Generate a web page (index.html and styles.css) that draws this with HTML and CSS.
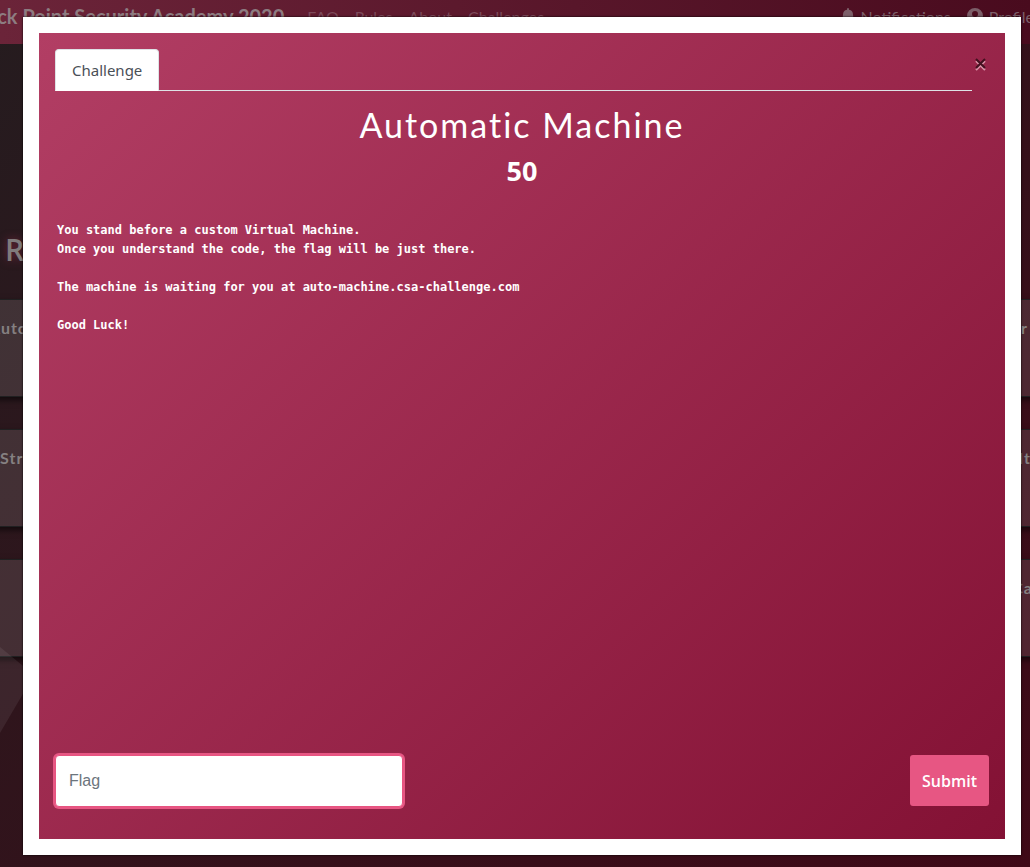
FILE: index.html
```
<!DOCTYPE html>
<html lang="en">
<head>
<meta charset="utf-8">
<meta name="viewport" content="width=device-width, initial-scale=1">
<title>Check Point Security Academy 2020</title>
<link rel="stylesheet" href="styles.css">
</head>
<body>
<div class="page">
  <svg class="facet" viewBox="0 0 60 90" aria-hidden="true"><path d="M0 2L34 30L0 88Z" fill="#ffffff" fill-opacity=".07"/></svg>
  <nav class="nav">
    <a class="brand" href="#">Check Point Security Academy 2020</a>
    <a class="nav-link" href="#">FAQ</a>
    <a class="nav-link" href="#">Rules</a>
    <a class="nav-link" href="#">About</a>
    <a class="nav-link" href="#">Challenges</a>
    <span class="spacer"></span>
    <a class="nav-link account" href="#"><svg class="icon" viewBox="0 0 14 16"><path fill="currentColor" d="M7 16a2 2 0 0 0 2-2H5a2 2 0 0 0 2 2zM13.700 11.300C13.100 10.700 12 9.700 12 6.500A5 5 0 0 0 8 1.700V1a1 1 0 0 0-2 0v.7A5 5 0 0 0 2 6.500C2 9.700.9 10.700.3 11.300A1 1 0 0 0 1 13h12a1 1 0 0 0 .7-1.700z"/></svg>Notifications</a>
    <a class="nav-link account" href="#"><svg class="icon" viewBox="0 0 16 16"><path fill="currentColor" fill-rule="evenodd" d="M8 0a8 8 0 1 0 0 16A8 8 0 0 0 8 0zm0 3a3 3 0 1 1 0 6 3 3 0 0 1 0-6zm0 11a6 6 0 0 1-4.600-2.200C4 10.700 5.100 10 6.400 10c.5.200 1 .3 1.600.3s1.100-.1 1.600-.3c1.300 0 2.400.7 3 1.800A6 6 0 0 1 8 14z"/></svg>Profile</a>
  </nav>
  <h3 class="category">R</h3>
  <div class="cards">
    <div class="card">Auto</div>
    <div class="card card-end">r</div>
    <div class="card inset">Str</div>
    <div class="card card-end near">It</div>
    <div class="card"></div>
    <div class="card card-end wide">Ca</div>
  </div>
</div>
<div class="overlay">
  <main class="modal" role="dialog" aria-labelledby="title">
    <div class="body">
      <header class="head">
        <div class="tabs"><button class="tab" type="button">Challenge</button></div>
        <button class="close" type="button" aria-label="Close"><svg class="cross" viewBox="0 0 13 13"><path d="M2 3L11 12M11 3L2 12" stroke="#d993a8" stroke-width="2"/><path d="M2 1L11 10M11 1L2 10" stroke="#42101f" stroke-width="2"/></svg></button>
      </header>
      <h1 class="title" id="title">Automatic Machine</h1>
      <h2 class="points">50</h2>
      <pre class="desc">You stand before a custom Virtual Machine.
Once you understand the code, the flag will be just there.

The machine is waiting for you at auto-machine.csa-challenge.com

Good Luck!</pre>
      <form class="answer">
        <input class="flag" type="text" placeholder="Flag" aria-label="Flag">
        <button class="submit" type="button">Submit</button>
      </form>
    </div>
  </main>
</div>
</body>
</html>
```
FILE: styles.css
```
* { box-sizing: border-box; }
body {
  margin: 0;
  font-family: Lato, sans-serif;
}
.page {
  position: relative;
  min-height: 100vh;
  overflow: hidden;
  background: linear-gradient(135deg, #251c1f, #3f0917);
}
.nav {
  display: flex;
  align-items: center;
  gap: 16px;
  height: 44px;
  padding-bottom: 12px;
  background: linear-gradient(90deg, #6b2439, #490b1e);
  white-space: nowrap;
  overflow: hidden;
}
.brand {
  margin: 0 7px 0 -38px;
  color: #8d7c81;
  font-size: 20px;
  font-weight: 700;
  text-decoration: none;
}
.nav-link {
  color: #7c4a5a;
  font-size: 16px;
  text-decoration: none;
}
.spacer { flex: 1; }
.account {
  display: flex;
  gap: 6px;
  align-items: center;
  color: #7c5f69;
}
.account:last-child { margin-right: -4px; }
.icon { height: 16px; }
.category {
  margin: 188px 0 0 5px;
  color: #807b7c;
  font: 600 30px/36px "Open Sans", sans-serif;
  text-shadow: 0 0 8px #6b2439;
}
.cards {
  display: grid;
  grid-template-columns: 1fr 1fr;
  gap: 32px;
  margin: 31px -12px 0;
}
.card {
  height: 98px;
  padding-top: 18px;
  border: 1px solid #202021;
  background: rgb(255 255 255 / 11%);
  box-shadow: 0 3px 6px rgb(0 0 0 / 60%);
  color: #858081;
  font-size: 16px;
  font-weight: 700;
  letter-spacing: 1px;
}
.inset { padding-left: 11px; }
.card-end {
  padding-right: 13px;
  text-align: right;
}
.near { padding-right: 10px; }
.wide { padding-right: 8px; }
.facet {
  position: absolute;
  top: 645px;
  left: 0;
  width: 60px;
}
.overlay {
  position: fixed;
  inset: 0;
  display: flex;
  padding: 17px 9px 12px 23px;
}
.modal {
  display: flex;
  flex: 1;
  padding: 16px;
  background: #fff;
  box-shadow: 0 0 2px #000;
}
.body {
  display: flex;
  flex: 1;
  flex-direction: column;
  padding: 16px 16px 32px;
  background: linear-gradient(135deg, #b23e64, #831134);
  color: #fff;
}
.head {
  display: flex;
  align-items: flex-start;
}
.tabs {
  display: flex;
  flex: 1;
  border-bottom: 1px solid #dee2e6;
}
.tab {
  height: 42px;
  margin-bottom: -1px;
  padding: 0 16px;
  border: 1px solid #dee2e6;
  border-bottom-color: #fff;
  border-radius: 4px 4px 0 0;
  background: #fff;
  color: #495057;
  font: 15px "Noto Sans", sans-serif;
}
.close {
  display: flex;
  width: 17px;
  margin-top: 9px;
  padding: 0 0 0 2px;
  border: 0;
  background: none;
}
.cross { width: 13px; }
.title {
  margin: 13px 0 0;
  font-size: 34px;
  font-weight: 400;
  line-height: 42px;
  letter-spacing: 2px;
  text-align: center;
}
.points {
  margin: 7px 0 0;
  font: 700 27px/36px "Open Sans", sans-serif;
  text-align: center;
}
.desc {
  margin: 32px 2px 0;
  font: 700 12px/19px "DejaVu Sans Mono", monospace;
  white-space: pre-wrap;
}
.answer {
  display: flex;
  justify-content: space-between;
  margin-top: auto;
}
.flag {
  width: 37%;
  min-width: 348px;
  height: 52px;
  padding: 0 13px;
  border: 1px solid #e75480;
  border-radius: 4px;
  outline: 0;
  background: #fff;
  box-shadow: 0 0 0 2px #e75683;
  font: 16px "Liberation Sans", sans-serif;
}
.flag::placeholder {
  color: #6c757d;
  opacity: 1;
}
.submit {
  height: 51px;
  padding: 0 12px;
  border: 0;
  border-radius: 3px;
  background: #e75683;
  color: #fff;
  font: 600 16px "Open Sans", sans-serif;
}
```
